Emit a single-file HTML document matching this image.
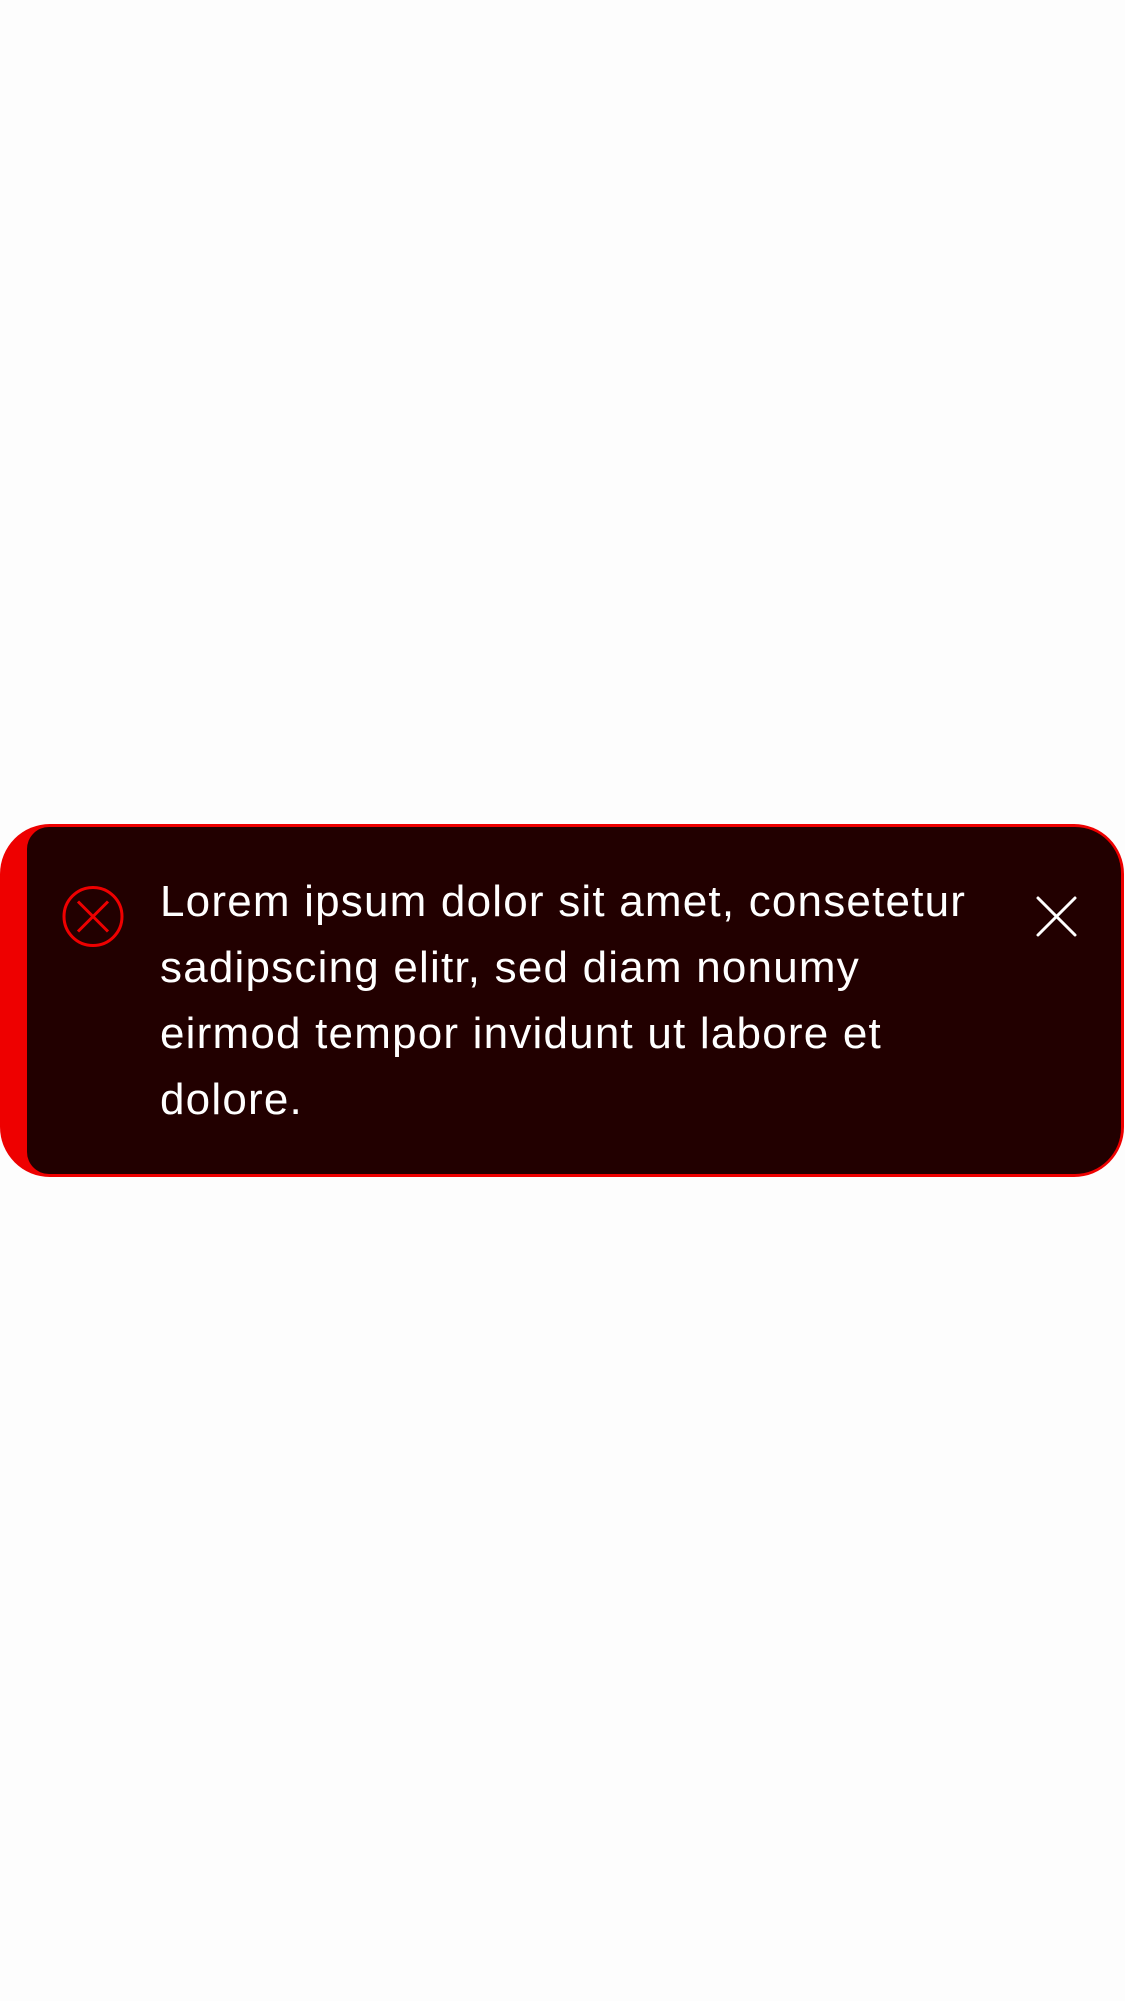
<!DOCTYPE html>
<html><head><meta charset="utf-8"><style>
html,body{margin:0;padding:0;background:#fdfdfd;width:1125px;height:2001px;overflow:hidden;position:relative}
.outer{position:absolute;left:0;top:824px;width:1124px;height:353px;background:#ee0000;border-radius:50px}
.inner{position:absolute;left:27px;top:827px;width:1094px;height:347px;background:#220000;border-radius:22px 46px 46px 22px}
.txt{position:absolute;left:160px;top:869px;font-family:"Liberation Sans",sans-serif;font-size:44px;line-height:66px;color:#fff;white-space:nowrap;letter-spacing:1.2px}
svg{position:absolute}
</style></head><body>
<div class="outer"></div>
<div class="inner"></div>
<svg style="left:60px;top:884px" width="66" height="66" viewBox="0 0 66 66"><circle cx="33" cy="32.5" r="29" fill="none" stroke="#ee0000" stroke-width="3"/><path d="M18 17.5L48 47.5M48 17.5L18 47.5" stroke="#ee0000" stroke-width="3"/></svg>
<svg style="left:1030px;top:892px" width="52" height="52" viewBox="0 0 52 52"><path d="M8 6L45 43M45 6L8 43" stroke="#fff" stroke-width="3" stroke-linecap="round"/></svg>
<div class="txt">Lorem ipsum dolor sit amet, consetetur<br>sadipscing elitr, sed diam nonumy<br>eirmod tempor invidunt ut labore et<br>dolore.</div>
</body></html>
